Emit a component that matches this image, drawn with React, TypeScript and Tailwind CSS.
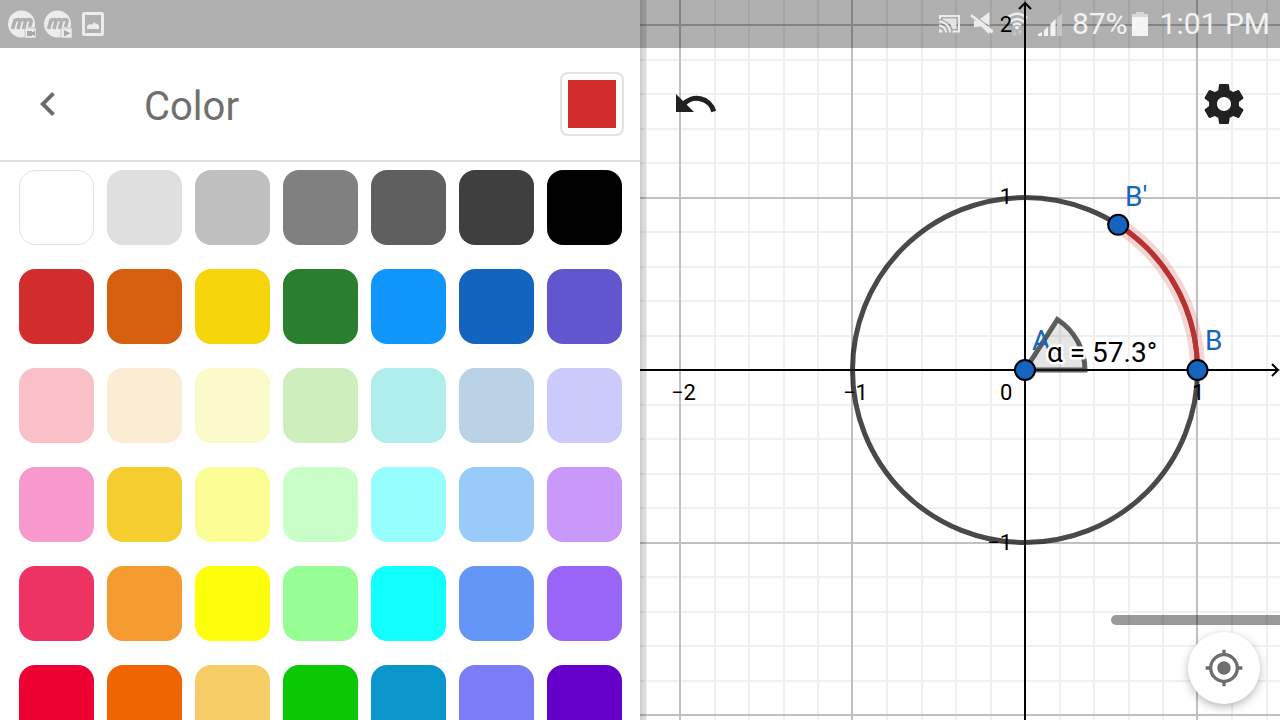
import { MdChevronLeft, MdMyLocation } from 'react-icons/md';
import { useState } from 'react';

const SWATCHES = [
  '#ffffff', '#dfdfdf', '#bfbfbf', '#808080', '#5f5f5f', '#3f3f3f', '#000000',
  '#d02d2c', '#d75f10', '#f6d60a', '#2a7f2f', '#1096fb', '#1264be', '#6156cd',
  '#f9c0c8', '#faedd3', '#fafaca', '#ceeebd', '#afeeec', '#bad2e5', '#cbcafb',
  '#f799cc', '#f6cd2f', '#fbfe95', '#cafec8', '#96fefd', '#98cafa', '#c998fb',
  '#ee3262', '#f59b30', '#fcfe0a', '#97fe96', '#10fefe', '#6496f8', '#9965f6',
  '#ed0032', '#ef6600', '#f6cd66', '#0ac904', '#0a95cb', '#7c7cf6', '#6400c9',
];

// plot geometry, in viewBox units
const OX = 385;
const OY = 370;
const UNIT = 172.5;
const MINOR = UNIT / 5;
const ALPHA = 1;

const pointAt = (radius: number, angle: number) => ({
  x: OX + radius * Math.cos(angle),
  y: OY - radius * Math.sin(angle),
});

const range = (from: number, to: number) => Array.from({ length: to - from + 1 }, (_, i) => from + i);

function RecorderIcon({ kind }: { kind: 'camera' | 'play' }) {
  return (
    <svg width="28" height="28" viewBox="0 0 28 28" aria-hidden="true">
      <circle cx="13.5" cy="14" r="13.5" fill="#ececec" />
      <path
        d="M4.500 19L7.200 9.500M6.500 10.500Q12.800 8 11.800 12L10 19M11.500 10.500Q18.300 8 17.300 12L15.500 19M17 10.500Q24 8 23 12L21.500 17"
        fill="none"
        stroke="#b0b0b0"
        strokeWidth="3.600"
      />
      <rect x="17" y="18" width="11" height="10" fill="#ececec" stroke="#c0c0c0" strokeWidth="0.800" />
      {kind === 'camera' ? (
        <path d="M19 21h5v1.200l3-1.200v5l-3-1.200v1.200h-5z" fill="#a8a8a8" />
      ) : (
        <path d="M20 20l6.500 3.200l-6.500 3.200z" fill="#a8a8a8" />
      )}
    </svg>
  );
}

function PhotoIcon() {
  return (
    <svg width="22" height="24" viewBox="0 0 22 24" aria-hidden="true">
      <rect x="1.500" y="1.500" width="19" height="21" rx="1" fill="none" stroke="#ececec" strokeWidth="3" />
      <path d="M5 17v-3l2.500-2l2 1l3-3l1.500 2l1.500-.5l1.500 2.500v3z" fill="#ececec" />
    </svg>
  );
}

function CastIcon() {
  return (
    <svg width="24" height="20" viewBox="0 0 24 20" aria-hidden="true">
      <path d="M2 5V2H21V17.500H14.500" fill="none" stroke="#ececec" strokeWidth="2" />
      <path d="M5 4.500H18.500V15H14.500Q12.500 8 5 6z" fill="#e4e4e4" />
      <g fill="none" stroke="#ececec" strokeWidth="2">
        <path d="M1 7.500A11 11 0 0 1 12 18.500" />
        <path d="M1 11.500A7 7 0 0 1 8 18.500" />
      </g>
      <path d="M1 15A3.500 3.500 0 0 1 4.500 18.500H1z" fill="#ececec" />
    </svg>
  );
}

function MuteIcon() {
  return (
    <svg width="24" height="24" viewBox="0 0 24 24" aria-hidden="true">
      <path d="M1.500 2L23.500 18.500L22 21.500L16 18L11 14.500L4 15V8.500H6L.5 4.500z" fill="#ececec" />
      <path d="M10 7L19.500 0V14z" fill="#ececec" />
      <path d="M11.500 15L19.500 22.500V18z" fill="#ececec" />
    </svg>
  );
}

function WifiIcon() {
  return (
    <svg width="24" height="24" viewBox="0 0 24 24" aria-hidden="true">
      <g fill="none" stroke="#ececec" strokeWidth="2.400">
        <path d="M1 6Q11 -2.500 21 6" />
        <path d="M4 10Q11 4 18 10" />
        <path d="M7 13.500Q11 9.500 15 13.500" />
      </g>
      <circle cx="11" cy="15.500" r="2" fill="#ececec" />
      <path d="M8.500 18v5M6.500 21l2 2.500l2-2.500M14 23.500v-5M12 21l2-2.500l2 2.500" fill="none" stroke="#c4c4c4" strokeWidth="1.600" />
    </svg>
  );
}

function SignalIcon() {
  return (
    <svg width="26" height="24" viewBox="0 0 26 24" aria-hidden="true">
      <path d="M0 24v-2l4-2v4zM6 24v-5.500l4-4v9.500zM12.500 24v-12l5-5v17z" fill="#f2f2f2" />
      <path d="M19 24v-18l5-5v23z" fill="#c6c6c6" />
    </svg>
  );
}

function BatteryIcon() {
  return (
    <svg width="16" height="24" viewBox="0 0 16 24" aria-hidden="true">
      <path d="M4 0h8v2h4v4h-16v-4h4z" fill="#d8d8d8" />
      <path d="M0 5h16v19h-16z" fill="#f4f4f4" />
    </svg>
  );
}

function UndoIcon() {
  return (
    <svg width="48" height="48" viewBox="0 0 48 48" aria-hidden="true">
      <path d="M4 14v18h18z" fill="currentColor" />
      <path d="M11 25A17.600 17.600 0 0 1 41.800 31.500" fill="none" stroke="currentColor" strokeWidth="5" />
    </svg>
  );
}

function GearIcon() {
  return (
    <svg width="48" height="48" viewBox="0 0 24 24" fill="currentColor" aria-hidden="true">
      <path d="M19.43 12.98c.04-.32.07-.64.07-.98s-.03-.66-.07-.98l2.11-1.65c.19-.15.24-.42.12-.64l-2-3.46c-.12-.22-.39-.3-.61-.22l-2.49 1c-.52-.4-1.08-.73-1.69-.98l-.38-2.65C14.46 2.18 14.25 2 14 2h-4c-.25 0-.46.18-.49.42l-.38 2.65c-.61.25-1.17.59-1.69.98l-2.49-1c-.23-.09-.49 0-.61.22l-2 3.46c-.13.22-.07.49.12.64l2.11 1.65c-.04.32-.07.65-.07.98s.03.66.07.98l-2.11 1.65c-.19.15-.24.42-.12.64l2 3.46c.12.22.39.3.61.22l2.49-1c.52.4 1.08.73 1.69.98l.38 2.65c.03.24.24.42.49.42h4c.25 0 .46-.18.49-.42l.38-2.65c.61-.25 1.17-.59 1.69-.98l2.49 1c.23.09.49 0 .61-.22l2-3.46c.12-.22.07-.49-.12-.64l-2.11-1.65zM12 15.5c-1.93 0-3.5-1.57-3.5-3.5s1.57-3.5 3.5-3.5 3.5 1.57 3.5 3.5-1.57 3.5-3.5 3.5z" />
    </svg>
  );
}

function StatusBar() {
  return (
    <header className="absolute inset-x-0 top-0 z-10 flex h-12 items-center justify-between bg-black/31 pl-2 pr-2.5 text-[30px] leading-none text-[#f2f2f2]">
      <div className="flex items-center gap-2">
        <RecorderIcon kind="camera" />
        <RecorderIcon kind="play" />
        <div className="pl-[2px]">
          <PhotoIcon />
        </div>
      </div>
      <div className="flex items-center gap-2">
        <CastIcon />
        <MuteIcon />
        <div className="pl-1">
          <WifiIcon />
        </div>
        <SignalIcon />
        <div className="flex items-center gap-1">
          <span>87%</span>
          <BatteryIcon />
        </div>
        <time className="pl-1">1:01 PM</time>
      </div>
    </header>
  );
}

type ColorPanelProps = {
  selected: string;
  onSelect: (color: string) => void;
};

function ColorPanel({ selected, onSelect }: ColorPanelProps) {
  return (
    <section className="flex w-1/2 flex-col overflow-hidden bg-white pt-12">
      <div className="flex h-[114px] shrink-0 items-center border-b-2 border-[#dfdfdf] pl-6 pr-4">
        <button aria-label="Back" className="text-[#6b6b6b]">
          <MdChevronLeft size={48} />
        </button>
        <h1 className="flex-1 pl-[72px] pt-1.5 text-[40px] leading-none text-[#6f6f6f]">Color</h1>
        <div className="rounded-lg border-2 border-[#e2e2e2] p-1.5">
          <div className="size-12" style={{ backgroundColor: selected }} />
        </div>
      </div>
      <div className="grid grid-cols-7 gap-x-[13px] gap-y-6 pl-[19px] pr-[18px] pt-2">
        {SWATCHES.map((color) => (
          <button
            key={color}
            aria-label={color}
            onClick={() => onSelect(color)}
            className={`aspect-square rounded-2xl ${color === '#ffffff' ? 'border border-[#e4e4e4]' : ''}`}
            style={{ backgroundColor: color }}
          />
        ))}
      </div>
    </section>
  );
}

function GridLines() {
  return (
    <svg viewBox="0 0 640 720" preserveAspectRatio="xMidYMid slice" className="absolute inset-0 size-full" aria-hidden="true">
      {range(-11, 7).filter((i) => i % 5 !== 0).map((i) => (
        <path key={`v${i}`} d={`M${Math.round(OX + i * MINOR)} 0V720`} stroke="#f0f0f0" strokeWidth="2" />
      ))}
      {range(-10, 10).filter((i) => i % 5 !== 0).map((i) => (
        <path key={`h${i}`} d={`M0 ${Math.round(OY + i * MINOR)}H640`} stroke="#f0f0f0" strokeWidth="2" />
      ))}
      {range(-2, 1).map((i) => (
        <path key={`V${i}`} d={`M${Math.floor(OX + i * UNIT)} 0V720`} stroke="#c0c0c0" strokeWidth="2" />
      ))}
      {range(-2, 2).map((i) => (
        <path key={`H${i}`} d={`M0 ${Math.round(OY + i * UNIT)}H640`} stroke="#c0c0c0" strokeWidth="2" />
      ))}
    </svg>
  );
}

function Plot({ color }: { color: string }) {
  const b = pointAt(UNIT, 0);
  const b2 = pointAt(UNIT, ALPHA);
  const s = pointAt(60, 0);
  const e = pointAt(60, ALPHA);
  const arc = `M${b.x} ${b.y}A${UNIT} ${UNIT} 0 0 0 ${b2.x} ${b2.y}`;

  return (
    <svg viewBox="0 0 640 720" preserveAspectRatio="xMidYMid slice" className="pointer-events-none absolute inset-0 z-20 size-full">
      <g fill="none" stroke="#000" strokeWidth="2">
        <path d="M0 370H637M632 364L638 370L632 376" />
        <path d="M385 720V3M379 9L385 3L391 9" />
      </g>

      <circle cx={OX} cy={OY} r={UNIT} fill="none" stroke="#1c1c1c" strokeOpacity="0.8" strokeWidth="5" />
      <path
        d={`M${OX} ${OY}H${s.x}A60 60 0 0 0 ${e.x} ${e.y}Z`}
        fill="#000"
        fillOpacity="0.1"
        stroke="#1c1c1c"
        strokeOpacity="0.7"
        strokeWidth="5"
      />
      <path d={arc} fill="none" stroke={color} strokeOpacity="0.2" strokeWidth="15" />
      <path d={arc} fill="none" stroke={color} strokeOpacity="0.8" strokeWidth="5" />

      <g fontSize="22" fill="#000">
        <text x="31" y="400">−2</text>
        <text x="203" y="400">−1</text>
        <text x="360" y="400">0</text>
        <text x="552" y="400">1</text>
        <g textAnchor="end">
          <text x="372" y="32">2</text>
          <text x="372" y="204">1</text>
          <text x="372" y="550">−1</text>
        </g>
      </g>

      <g fontSize="28" fill="#1565c0">
        <text x="392" y="350">A</text>
        <text x="565" y="350">B</text>
        <text x="485" y="206">B'</text>
      </g>
      <text x="407" y="362" fontSize="28" fill="#000" stroke="#fff" strokeWidth="5" strokeLinejoin="round" paintOrder="stroke">
        α = 57.3°
      </text>

      <g fill="#1565c0" stroke="#000" strokeWidth="2">
        <circle cx={OX} cy={OY} r="10" />
        <circle cx={b.x} cy={b.y} r="10" />
        <circle cx={b2.x} cy={b2.y} r="10" />
      </g>
    </svg>
  );
}

function GraphView({ color }: { color: string }) {
  return (
    <main className="relative w-1/2 overflow-hidden bg-white">
      <GridLines />
      <div className="absolute inset-y-0 left-0 w-1.5 bg-linear-to-r from-black/20 to-black/10" />
      <Plot color={color} />
      <div className="relative flex h-full flex-col justify-between px-8 pb-4 pt-20">
        <div className="flex justify-between text-[#212121]">
          <button aria-label="Undo">
            <UndoIcon />
          </button>
          <button aria-label="Settings">
            <GearIcon />
          </button>
        </div>
        <button
          aria-label="Center view"
          className="-mr-3 flex size-[72px] items-center justify-center self-end rounded-full bg-white text-[#6e6e6e] shadow-[0_3px_10px_rgba(0,0,0,0.28)]"
        >
          <MdMyLocation size={40} />
        </button>
      </div>
      <div className="absolute bottom-[95px] right-0 h-2.5 w-[169px] rounded-l-full bg-black/40" />
    </main>
  );
}

export default function App() {
  const [color, setColor] = useState('#d02d2c');

  return (
    <div className="relative flex h-screen overflow-hidden font-[Roboto,sans-serif]">
      <StatusBar />
      <ColorPanel selected={color} onSelect={setColor} />
      <GraphView color={color} />
    </div>
  );
}
